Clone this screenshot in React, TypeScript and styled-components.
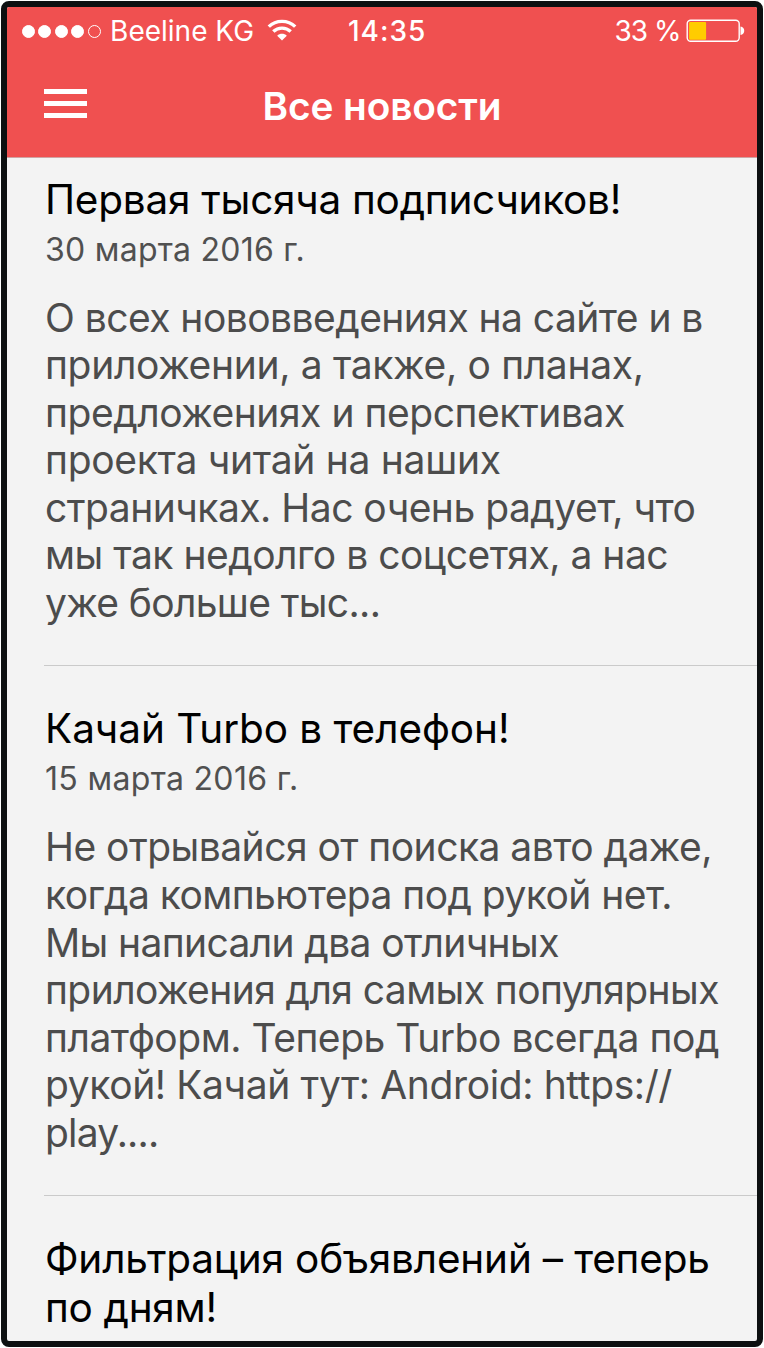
import React from "react";
import styled, { createGlobalStyle } from "styled-components";

const GlobalStyle = createGlobalStyle`
  * { box-sizing: border-box; }
  body { margin: 0; background: #fff; font-family: Inter, "Liberation Sans", sans-serif; }
  h1, h2, p { margin: 0; }
`;

const Page = styled.div`
  height: 1348px;
  padding: 1px;
  overflow: hidden;
`;

const Phone = styled.div`
  display: flex;
  flex-direction: column;
  height: 1346px;
  border: 6px solid #0d1011;
  border-radius: 8px;
  background: #f3f3f3;
  overflow: hidden;
`;

const Header = styled.header`
  flex: none;
  height: 151px;
  background: #f05050;
  color: #fff;
  border-bottom: 1px solid #cfa3a3;
`;

const StatusBar = styled.div`
  display: grid;
  grid-template-columns: 326px auto 1fr;
  align-items: center;
  height: 48px;
  padding: 0 11px 0 15px;
`;

const Carrier = styled.div`
  display: flex;
  align-items: center;
`;

const Signal = styled.div`
  display: flex;
  gap: 3.4px;
  margin-right: 9.5px;
`;

const Dot = styled.span<{ $empty?: boolean }>`
  width: 13px;
  height: 13px;
  border-radius: 50%;
  border: 1px solid #fff;
  background: ${(p) => (p.$empty ? "transparent" : "#fff")};
`;

const StatusText = styled.span<{ $weight?: number; $spacing?: number }>`
  font-size: 28px;
  line-height: 34px;
  margin-top: -0.5px;
  font-weight: ${(p) => p.$weight ?? 400};
  letter-spacing: ${(p) => p.$spacing ?? 0}px;
  white-space: nowrap;
`;

const WifiIcon = styled.svg`
  width: 30px;
  height: 23px;
  margin: -1px 0 0 13px;
`;

const Power = styled.div`
  display: flex;
  align-items: center;
  justify-content: flex-end;
`;

const Battery = styled.svg`
  width: 60px;
  height: 24px;
  margin-left: 5.5px;
`;

const NavBar = styled.div`
  display: grid;
  grid-template-columns: 80px 1fr 80px;
  align-items: center;
  height: 102px;
`;

const MenuButton = styled.button`
  display: flex;
  flex-direction: column;
  gap: 7px;
  width: 43px;
  margin: -5px 0 0 37px;
  padding: 0;
  border: 0;
  background: none;
`;

const MenuBar = styled.span`
  height: 5px;
  background: #fff;
`;

const NavTitle = styled.h1`
  font-size: 38.8px;
  line-height: 48px;
  font-weight: 600;
  letter-spacing: -0.1px;
  text-align: center;
  white-space: nowrap;
`;

const Feed = styled.main`
  flex: 1;
  min-height: 0;
  overflow: hidden;
`;

const Article = styled.article<{ $first?: boolean }>`
  margin-left: 37px;
  padding: ${(p) => (p.$first ? 16.5 : 38.8)}px 0 38px 1px;
`;

const Divider = styled.div`
  height: 1px;
  margin-left: 37px;
  background: #cacaca;
`;

const Line = styled.span<{ $spacing: number }>`
  display: block;
  white-space: nowrap;
  letter-spacing: ${(p) => p.$spacing}px;
`;

const Title = styled.h2`
  font-size: 40.5px;
  line-height: 49px;
  font-weight: 400;
  color: #000;
`;

const DateText = styled.p`
  margin-top: 6px;
  font-size: 32px;
  line-height: 39px;
  color: #505050;
`;

const Body = styled.p`
  margin-top: 25px;
  font-size: 39px;
  line-height: 47.6px;
  color: #4c4c4c;
`;

type TextLine = [text: string, spacing: number];

interface NewsItem {
  title: TextLine[];
  date?: TextLine;
  body: TextLine[];
}

const news: NewsItem[] = [
  {
    title: [["Первая тысяча подписчиков!", -0.24]],
    date: ["30 марта 2016 г.", 0.27],
    body: [
      ["О всех нововведениях на сайте и в", -0.55],
      ["приложении, а также, о планах,", -0.33],
      ["предложениях и перспективах", -0.46],
      ["проекта читай на наших", -0.29],
      ["страничках. Нас очень радует, что", -0.51],
      ["мы так недолго в соцсетях, а нас", -0.5],
      ["уже больше тыс...", -0.65],
    ],
  },
  {
    title: [["Качай Turbo в телефон!", -0.05]],
    date: ["15 марта 2016 г.", 0.33],
    body: [
      ["Не отрывайся от поиска авто даже,", -0.53],
      ["когда компьютера под рукой нет.", -0.55],
      ["Мы написали два отличных", -0.63],
      ["приложения для самых популярных", -0.58],
      ["платформ. Теперь Turbo всегда под", -0.47],
      ["рукой! Качай тут: Android: https://", -0.38],
      ["play....", -0.8],
    ],
  },
  {
    title: [
      ["Фильтрация объявлений – теперь", -0.18],
      ["по дням!", -0.3],
    ],
    body: [],
  },
];

const renderLines = (lines: TextLine[]) =>
  lines.map(([text, spacing]) => (
    <Line key={text} $spacing={spacing}>
      {text}
    </Line>
  ));

export default function App() {
  return (
    <Page>
      <GlobalStyle />
      <Phone>
        <Header>
          <StatusBar>
            <Carrier>
              <Signal>
                <Dot />
                <Dot />
                <Dot />
                <Dot />
                <Dot $empty />
              </Signal>
              <StatusText>Beeline KG</StatusText>
              <WifiIcon viewBox="0 0 30 23" fill="none" stroke="#fff" strokeWidth="3.4">
                <path d="M1.8 7.6C9 .6 21 .6 28.2 7.6" />
                <path d="M6.3 12.6C11.2 8 18.8 8 23.7 12.6" />
                <path d="M15 21.5L10.2 16.8C12.8 14.2 17.2 14.2 19.8 16.8Z" fill="#fff" stroke="none" />
              </WifiIcon>
            </Carrier>
            <StatusText $weight={550} $spacing={1}>14:35</StatusText>
            <Power>
              <StatusText $spacing={-1}>33 %</StatusText>
              <Battery viewBox="0 0 60 24" fill="none">
                <rect x="1.2" y="1.2" width="52" height="21" rx="3.5" stroke="#fff" strokeWidth="1.4" />
                <rect x="3.1" y="2.9" width="17" height="17.8" rx="1" fill="#ffcc00" />
                <path d="M54.5 7.5C59.5 8.1 59.5 15.3 54.5 15.9Z" fill="#fff" />
              </Battery>
            </Power>
          </StatusBar>
          <NavBar>
            <MenuButton aria-label="Меню">
              <MenuBar />
              <MenuBar />
              <MenuBar />
            </MenuButton>
            <NavTitle>Все новости</NavTitle>
          </NavBar>
        </Header>
        <Feed>
          {news.map((item, i) => (
            <React.Fragment key={item.title[0][0]}>
              <Article $first={i === 0}>
                <Title>{renderLines(item.title)}</Title>
                {item.date && <DateText>{renderLines([item.date])}</DateText>}
                {item.body.length > 0 && <Body>{renderLines(item.body)}</Body>}
              </Article>
              {item.body.length > 0 && <Divider />}
            </React.Fragment>
          ))}
        </Feed>
      </Phone>
    </Page>
  );
}
